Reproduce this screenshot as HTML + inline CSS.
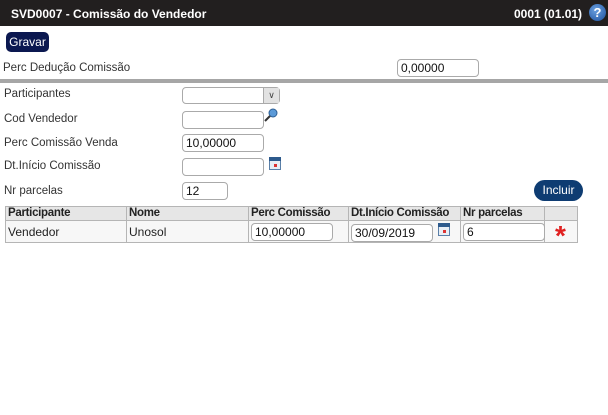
<!DOCTYPE html>
<html><head><meta charset="utf-8"><style>
*{box-sizing:border-box;margin:0;padding:0}
body{width:608px;height:415px;background:#fff;font-family:"Liberation Sans",Arial,sans-serif;font-size:12px;color:#222;position:relative;overflow:hidden}
.a{position:absolute}
.hdr{left:0;top:0;width:608px;height:26px;background:#221f1f;color:#fff;font-weight:bold;font-size:12px}
.lbl{font-size:11.5px;color:#333}
.in{position:absolute;border:1px solid #aaa;border-radius:4px;background:#fff;height:18px;font-size:12px;padding:2px 3px;color:#111;line-height:13px}
table{position:absolute;left:5px;top:206px;border-collapse:collapse;width:572px;font-size:12px;table-layout:fixed}
td,th{border:1px solid #b5b5b5;padding:0 2px;text-align:left;white-space:nowrap;overflow:visible}
th{background:#e6e6e6;height:14px;font-weight:bold;font-size:11.5px;letter-spacing:-0.3px;line-height:13px}
td{background:#f7f7f7;height:22px;position:relative;line-height:14px}
.cal{position:absolute;width:12px;height:13px;border:1px solid #5a7fa8;background:#e8eef5}
.cal:before{content:"";position:absolute;left:-1px;top:-1px;width:12px;height:4px;background:#2d5a8c}
.cal:after{content:"";position:absolute;left:4px;top:6px;width:3px;height:3px;background:#d33}
</style></head><body>
<div class="a hdr"><span class="a" style="left:11px;top:7px">SVD0007 - Comissão do Vendedor</span><span class="a" style="left:514px;top:7px">0001 (01.01)</span>
<div class="a" style="left:589px;top:4px;width:17px;height:17px;border-radius:50%;background:radial-gradient(circle at 40% 35%,#6aa0e0,#1c4f9c);color:#fff;font-size:13px;font-weight:bold;text-align:center;line-height:17px">?</div></div>
<div class="a" style="left:6px;top:32px;width:43px;height:20px;background:#0b1850;border-radius:5px;color:#fff;font-size:12px;text-align:center;line-height:20px">Gravar</div>
<div class="a lbl" style="left:3px;top:62px">Perc Dedução Comissão</div>
<div class="in" style="left:397px;top:59px;width:82px">0,00000</div>
<div class="a" style="left:0;top:79px;width:608px;height:4px;background:#a6a6a6"></div>
<div class="a lbl" style="left:4px;top:88px">Participantes</div>
<div class="in" style="left:182px;top:87px;width:98px;height:17px"><div class="a" style="right:0;top:0;width:16px;height:15px;background:#e2e2e2;border-left:1px solid #aaa;font-size:9px;text-align:center;line-height:15px;color:#444">&#8744;</div></div>
<div class="a lbl" style="left:4px;top:113px">Cod Vendedor</div>
<div class="in" style="left:182px;top:111px;width:82px"></div>
<svg class="a" style="left:264px;top:108px" width="14" height="14"><circle cx="9" cy="5" r="4" fill="#5b9ad8" stroke="#2e5f94"/><line x1="6" y1="8" x2="1" y2="13" stroke="#333" stroke-width="2"/></svg>
<div class="a lbl" style="left:4px;top:137px">Perc Comissão Venda</div>
<div class="in" style="left:182px;top:134px;width:82px">10,00000</div>
<div class="a lbl" style="left:4px;top:160px">Dt.Início Comissão</div>
<div class="in" style="left:182px;top:158px;width:82px"></div>
<div class="cal" style="left:269px;top:157px"></div>
<div class="a lbl" style="left:4px;top:185px">Nr parcelas</div>
<div class="in" style="left:182px;top:182px;width:46px">12</div>
<div class="a" style="left:534px;top:180px;width:49px;height:21px;background:#0e3c72;border-radius:11px;color:#fff;text-align:center;line-height:21px;font-size:12px">Incluir</div>
<table>
<colgroup><col style="width:121px"><col style="width:122px"><col style="width:100px"><col style="width:112px"><col style="width:84px"><col style="width:33px"></colgroup>
<tr><th>Participante</th><th>Nome</th><th>Perc Comissão</th><th>Dt.Início Comissão</th><th>Nr parcelas</th><th></th></tr>
<tr><td>Vendedor</td><td>Unosol</td><td><div class="in" style="left:2px;top:2px;width:82px">10,00000</div></td><td><div class="in" style="left:2px;top:3px;width:82px">30/09/2019</div><div class="cal" style="left:89px;top:2px"></div></td><td><div class="in" style="left:2px;top:2px;width:82px">6</div></td><td><span class="a" style="left:10px;top:1px;color:#e02020;font-size:28px;font-weight:bold;line-height:28px">*</span></td></tr>
</table>
</body></html>
